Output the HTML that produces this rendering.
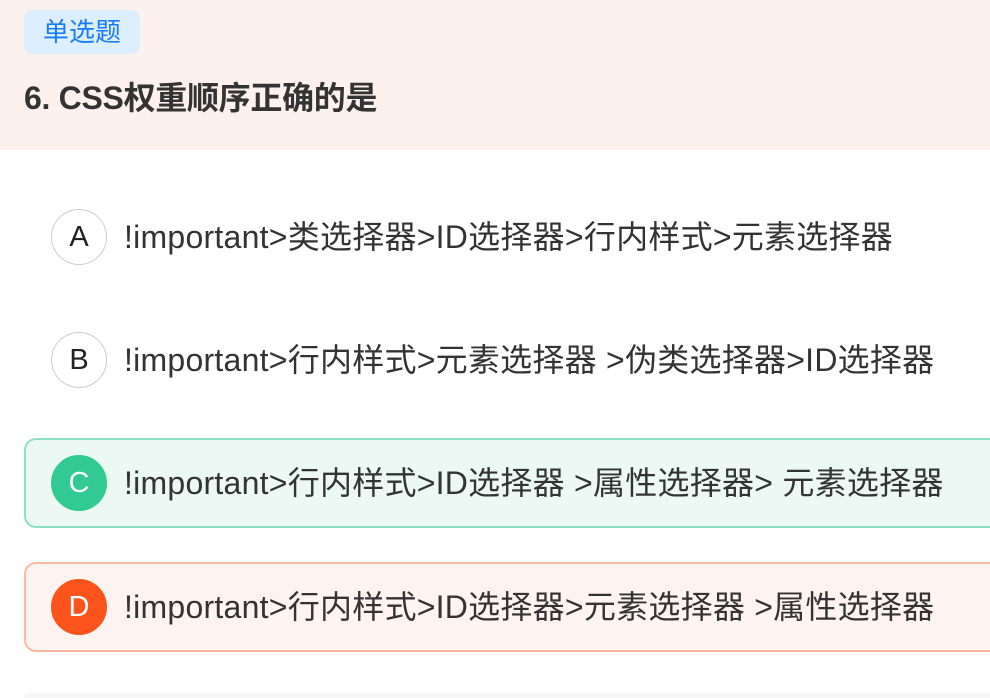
<!DOCTYPE html>
<html><head><meta charset="utf-8"><style>
*{margin:0;padding:0;box-sizing:border-box}
html,body{width:990px;height:698px;overflow:hidden}
body{background:#fff;font-family:"Liberation Sans","Noto Sans CJK SC",sans-serif;position:relative;color:#333}
.hd{position:absolute;left:0;top:0;width:990px;height:150px;background:#fdf1ee}
.tag{position:absolute;left:24px;top:10px;width:116px;height:44px;background:#ddefff;border-radius:8px;color:#1a7cf5;font-size:26px;line-height:44px;text-align:center}
.tt{position:absolute;left:24px;top:78px;font-size:32px;font-weight:bold;color:#333;line-height:40px;letter-spacing:-0.3px}
.opt{position:absolute;left:24px;width:990px;height:90px;border-radius:12px;border:2px solid transparent}
.c{position:absolute;left:25px;top:15px;width:56px;height:56px;border-radius:50%;border:1px solid #ccc;background:#fff;font-size:29px;line-height:54px;text-align:center;color:#222}
.t{position:absolute;left:98px;top:23px;font-size:32px;line-height:40px;color:#333;white-space:nowrap;letter-spacing:0.25px}
</style></head><body>
<div class="hd"><div class="tag">单选题</div><div class="tt">6. CSS权重顺序正确的是</div></div>
<div class="opt" style="top:192px"><div class="c">A</div><div class="t">!important&gt;类选择器&gt;ID选择器&gt;行内样式&gt;元素选择器</div></div>
<div class="opt" style="top:315px"><div class="c">B</div><div class="t">!important&gt;行内样式&gt;元素选择器 &gt;伪类选择器&gt;ID选择器</div></div>
<div class="opt" style="top:438px;background:#ebf8f4;border-color:#8ee0c3"><div class="c" style="background:#33c995;border-color:#33c995;color:#fff">C</div><div class="t">!important&gt;行内样式&gt;ID选择器 &gt;属性选择器&gt; 元素选择器</div></div>
<div class="opt" style="top:562px;background:#fdf3f1;border-color:#fdb9a3"><div class="c" style="background:#fd541d;border-color:#fd541d;color:#fff">D</div><div class="t">!important&gt;行内样式&gt;ID选择器&gt;元素选择器 &gt;属性选择器</div></div>
<div style="position:absolute;left:24px;top:693px;width:966px;height:5px;background:#f6f6f6;border-radius:12px 0 0 0"></div>
</body></html>
